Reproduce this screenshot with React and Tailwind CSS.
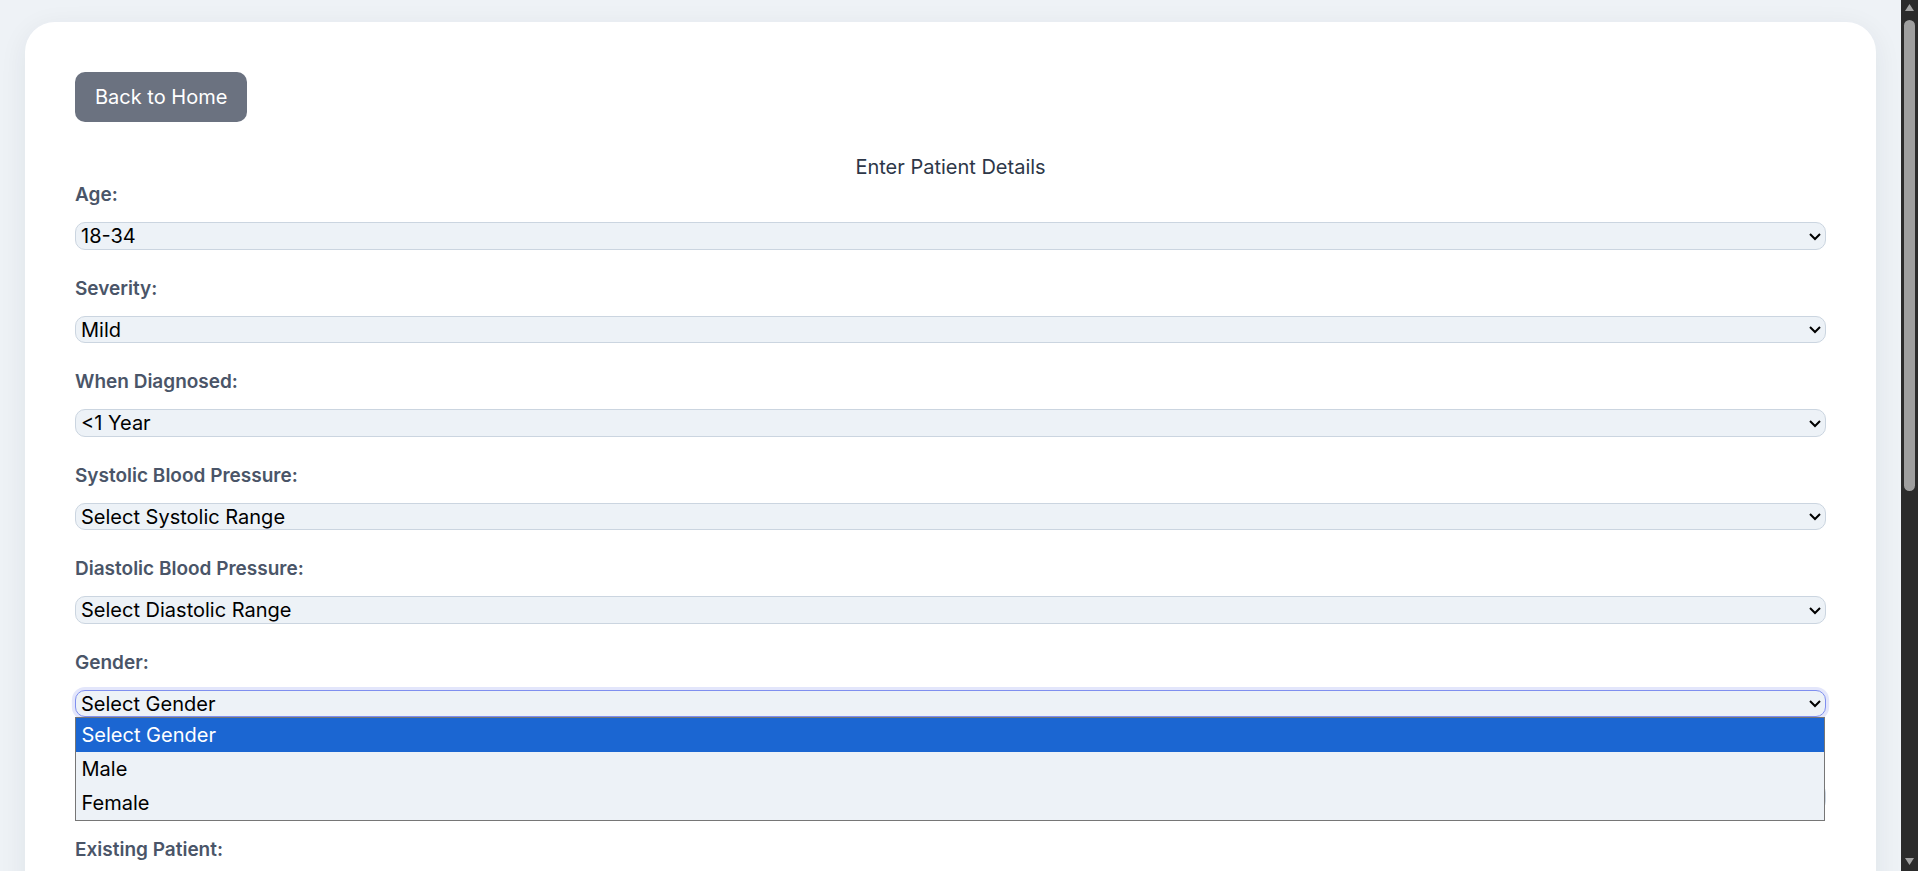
import { useState } from 'react'

const fields = [
    { name: 'age', label: 'Age:', options: ['18-34', '35-49', '50-64', '65+'] },
    { name: 'severity', label: 'Severity:', options: ['Mild', 'Moderate', 'Severe'] },
    { name: 'diagnosed', label: 'When Diagnosed:', options: ['<1 Year', '1-5 Years', '>5 Years'] },
    { name: 'systolic', label: 'Systolic Blood Pressure:', options: ['Select Systolic Range', '<120', '120-139', '140+'] },
    { name: 'diastolic', label: 'Diastolic Blood Pressure:', options: ['Select Diastolic Range', '<80', '80-89', '90+'] },
]

const genderOptions = ['Select Gender', 'Male', 'Female']

const labelClass = 'block h-[26px] text-[19px] leading-[26px] font-semibold text-[#4a5568] mb-[14px]'

const Field = ({ label, children }) => (
    <div className="mb-[26px]">
        <label className={labelClass}>{label}</label>
        {children}
    </div>
)

// native selects are zoomed so the browser's arrow scales like the reference
const selectClass =
    'block w-full [zoom:1.25] h-[22px] px-0 text-[16px] text-black bg-[#edf2f7] border border-[#cbd5e0] rounded-[8px] outline-none'

const Scrollbar = () => (
    <div className="w-[17px] h-full bg-[#2b2b2b] flex flex-col items-center shrink-0">
        <svg width="11" height="20" viewBox="0 0 11 20" className="shrink-0">
            <path d="M5.5 4 L10 11 L1 11 Z" fill="#a3a3a3" />
        </svg>
        <div className="w-[11px] h-[471px] bg-[#9f9f9f] rounded-[6px]" />
        <div className="flex-1" />
        <svg width="11" height="17" viewBox="0 0 11 17" className="shrink-0">
            <path d="M1 4 L10 4 L5.5 11 Z" fill="#a3a3a3" />
        </svg>
    </div>
)

export default function App() {
    const [values, setValues] = useState({})

    return (
        <div className="h-[871px] w-full flex overflow-hidden bg-[#eef2f6]" style={{ fontFamily: 'Inter, "Noto Sans", sans-serif' }}>
            <div className="flex-1 min-w-0 pt-[22px] px-[25px] overflow-hidden">
                <div className="bg-white rounded-[30px] shadow-[0_6px_28px_rgba(30,41,59,0.07)] px-[50px] pt-[50px] pb-[50px]">
                    <button className="bg-[#6b7280] text-white text-[20px] leading-[30px] px-[20px] py-[10px] rounded-[10px]">
                        Back to Home
                    </button>

                    <h2 className="mt-[30px] text-center text-[20px] leading-[30px] text-[#2d3748]">Enter Patient Details</h2>

                    <form>
                        {fields.map((f) => (
                            <Field key={f.name} label={f.label}>
                                <select
                                    className={selectClass}
                                    value={values[f.name] || f.options[0]}
                                    onChange={(e) => setValues({ ...values, [f.name]: e.target.value })}
                                >
                                    {f.options.map((o) => (
                                        <option key={o}>{o}</option>
                                    ))}
                                </select>
                            </Field>
                        ))}

                        {/* Gender, shown with its list open */}
                        <div className="mb-[26px] relative z-10">
                            <label className={labelClass}>Gender:</label>
                            <div className="relative">
                                <select
                                    className="block w-full [zoom:1.25] h-[22px] px-0 text-[16px] text-black bg-[#edf2f7] border border-[#7f8fef] rounded-[8px] outline-none shadow-[0_0_0_2.5px_rgba(127,143,239,0.22)]"
                                    defaultValue="Select Gender"
                                >
                                    {genderOptions.map((o) => (
                                        <option key={o}>{o}</option>
                                    ))}
                                </select>
                                <div className="absolute left-0 right-[1px] top-full border border-[#767676] bg-[#edf2f7]">
                                    {genderOptions.map((o, i) => (
                                        <div
                                            key={o}
                                            className={
                                                i === 0
                                                    ? 'h-[34px] px-[5.5px] flex items-center text-[20px] bg-[#1b66d2] text-white'
                                                    : 'h-[34px] px-[5.5px] flex items-center text-[20px] text-black'
                                            }
                                        >
                                            {o}
                                        </div>
                                    ))}
                                </div>
                            </div>
                        </div>

                        {/* row hidden under the open list */}
                        <div className="mb-[26px]">
                            <div className="h-[26px] mb-[14px]" />
                            <div className="w-full h-[27.5px] bg-[#edf2f7] border border-[#cbd5e0] rounded-[10px]" />
                        </div>

                        <Field label="Existing Patient:">
                            <select className={selectClass} defaultValue="Select Option">
                                <option>Select Option</option>
                                <option>Yes</option>
                                <option>No</option>
                            </select>
                        </Field>
                    </form>
                </div>
            </div>
            <Scrollbar />
        </div>
    )
}
